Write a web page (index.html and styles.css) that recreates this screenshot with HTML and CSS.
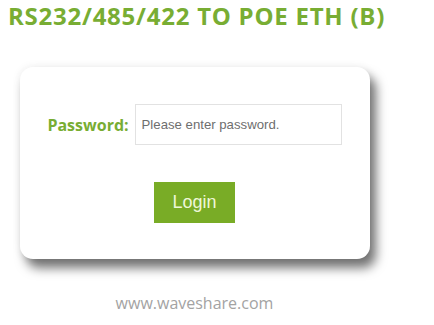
FILE: index.html
```html
<!DOCTYPE html>
<html>
<head>
<meta charset="utf-8">
<link rel="stylesheet" href="styles.css">
</head>
<body>
<h1 class="title">RS232/485/422 TO POE ETH (B)</h1>
<div class="wrap">
  <div class="card">
    <div class="row">
      <label class="label" for="pw">Password:</label>
      <input class="input" id="pw" type="password" placeholder="Please enter password.">
    </div>
    <button class="btn">Login</button>
  </div>
  <div class="footer">www.waveshare.com</div>
</div>
</body>
</html>
```
FILE: styles.css
```css
html, body {
  margin: 0;
  padding: 0;
  background: #fff;
}
body {
  font-family: "Open Sans", "Liberation Sans", sans-serif;
}
.title {
  margin: 0 0 0 8px;
  font-size: 24px;
  line-height: 31px;
  font-weight: 700;
  letter-spacing: 0.75px;
  color: #78ad33;
}
.wrap {
  width: 349px;
  margin: 36px 0 0 20px;
  display: flex;
  flex-direction: column;
  align-items: center;
}
.card {
  box-sizing: border-box;
  width: 350px;
  height: 192px;
  background: #fff;
  border-radius: 13px;
  box-shadow: 6px 9px 11px rgba(0,0,0,0.55), 0 0 10px rgba(0,0,0,0.07);
  display: flex;
  flex-direction: column;
  align-items: center;
  padding-top: 37px;
}
.row {
  display: flex;
  align-items: center;
  gap: 6px;
}
.label {
  font-size: 16px;
  font-weight: 700;
  color: #78ad33;
}
.input {
  box-sizing: border-box;
  width: 207px;
  height: 41px;
  border: 1px solid #e2e2e2;
  padding: 0 6px;
  font-family: "Liberation Sans", Arial, sans-serif;
  font-size: 13.2px;
  outline: none;
}
.input::placeholder {
  color: #6e6e6e;
}
.btn {
  margin-top: 37px;
  width: 81px;
  height: 41px;
  border: none;
  background: #79ac26;
  color: #eef7d8;
  font-family: "Liberation Sans", Arial, sans-serif;
  font-size: 18px;
  padding: 0;
}
.footer {
  margin-top: 33px;
  font-size: 16px;
  line-height: 22px;
  color: #a3a3a3;
}
```
